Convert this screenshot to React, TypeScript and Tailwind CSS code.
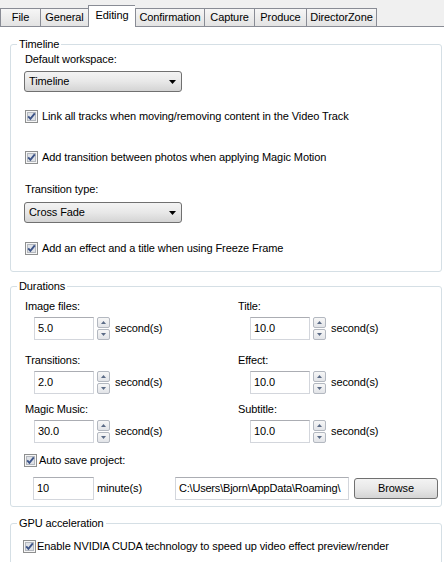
import React from 'react';

const tabs = [
  { label: 'File', w: 'w-[40px]' },
  { label: 'General', w: 'w-[48px]' },
  { label: 'Editing', w: 'w-[47px]', active: true },
  { label: 'Confirmation', w: 'w-[69px]' },
  { label: 'Capture', w: 'w-[50px]' },
  { label: 'Produce', w: 'w-[52px]' },
  { label: 'DirectorZone', w: 'w-[71px]', last: true },
];

const Checkbox = () => (
  <svg width="13" height="13" viewBox="0 0 13 13" className="shrink-0">
    <rect x="0.5" y="0.5" width="12" height="12" fill="#f6f6f6" stroke="#8e8f8f" />
    <rect x="2.5" y="2.5" width="8" height="8" fill="#dfe2e7" stroke="#b4b8be" />
    <path d="M3.2 6.4 L5.4 8.8 L9.8 3.4" fill="none" stroke="#3d5488" strokeWidth="1.9" />
  </svg>
);

const CheckRow = ({ label, className = '' }: { label: string; className?: string }) => (
  <div className={`flex items-center h-[14px] ${className}`}>
    <Checkbox />
    <span className="ml-[4px] leading-[14px] whitespace-nowrap">{label}</span>
  </div>
);

const Dropdown = ({ value, className = '' }: { value: string; className?: string }) => (
  <div
    className={`flex items-center justify-between w-[158px] h-[21px] pl-[4px] pr-[5px] border border-[#707070] rounded-[3px] bg-linear-to-b from-[#f3f3f3] via-[#e8e8e8] to-[#d4d4d4] ${className}`}
  >
    <span>{value}</span>
    <svg width="7" height="4" viewBox="0 0 7 4">
      <path d="M0 0 H7 L3.5 4 Z" fill="#000" />
    </svg>
  </div>
);

const SpinHalf = ({ up }: { up?: boolean }) => (
  <div className="flex items-center justify-center h-[11px] w-[13px] border border-[#b3b8c0] rounded-[2px] bg-linear-to-b from-[#f7f7f7] to-[#e2e4e8]">
    <svg width="5" height="3" viewBox="0 0 5 3">
      <path d={up ? 'M0 3 H5 L2.5 0 Z' : 'M0 0 H5 L2.5 3 Z'} fill="#5b6b86" />
    </svg>
  </div>
);

const TextBox = ({ value, className = '' }: { value: string; className?: string }) => (
  <div
    className={`flex items-center h-[23px] pl-[3px] border border-[#d3d6dc] border-t-[#abadb3] bg-white overflow-hidden whitespace-nowrap ${className}`}
  >
    {value}
  </div>
);

const Duration = ({ label, value, indent, className = '' }: { label: string; value: string; indent: string; className?: string }) => (
  <div className={`flex flex-col ${className}`}>
    <span className="leading-[14px]">{label}</span>
    <div className={`flex items-center mt-[4px] ${indent}`}>
      <TextBox value={value} className="w-[60px]" />
      <div className="flex flex-col gap-[1px] ml-[3px]">
        <SpinHalf up />
        <SpinHalf />
      </div>
      <span className="ml-[5px]">second(s)</span>
    </div>
  </div>
);

const Group = ({ title, children, className = '' }: { title: string; children: React.ReactNode; className?: string }) => (
  <fieldset className={`border border-[#d5dfe5] rounded-[3px] pl-[14px] pr-[2px] ${className}`}>
    <legend className="ml-[-8px] px-[2px] leading-[14px]">{title}</legend>
    {children}
  </fieldset>
);

export default function App() {
  return (
    <div className="w-[444px] h-[562px] overflow-hidden bg-white text-black text-[11px] tracking-[-0.1px] font-['Liberation_Sans',Arial,sans-serif]">
      {/* Tab strip */}
      <div className="flex items-end h-[27px] bg-[#f0f0f0] border-b border-[#898c95]">
        {tabs.map((t) =>
          t.active ? (
            <div
              key={t.label}
              className={`relative z-10 -mb-px flex items-center justify-center h-[22px] ${t.w} bg-white border-l border-t border-[#898c95] pb-[3px]`}
            >
              {t.label}
            </div>
          ) : (
            <div
              key={t.label}
              className={`flex items-center justify-center h-[18px] ${t.w} border-l border-t border-[#898c95] bg-linear-to-b from-[#f6f6f6] to-[#e3e3e3] ${t.last ? 'border-r' : ''}`}
            >
              {t.label}
            </div>
          )
        )}
      </div>

      {/* Page */}
      <div className="pl-[10px] pr-[2px] pt-[10px] flex flex-col">
        <Group title="Timeline" className="pb-[16px]">
          <div className="flex flex-col">
            <span className="mt-[1px] leading-[14px]">Default workspace:</span>
            <Dropdown value="Timeline" className="mt-[5px] ml-[-1px]" />
            <CheckRow label="Link all tracks when moving/removing content in the Video Track" className="mt-[17px]" />
            <CheckRow label="Add transition between photos when applying Magic Motion" className="mt-[27px]" />
            <span className="mt-[18px] leading-[14px]">Transition type:</span>
            <Dropdown value="Cross Fade" className="mt-[6px] ml-[-1px]" />
            <CheckRow label="Add an effect and a title when using Freeze Frame" className="mt-[18px]" />
          </div>
        </Group>

        <Group title="Durations" className="mt-[7px] pb-[6px]">
          <div className="grid grid-cols-[213px_1fr] mt-[6px]">
            <Duration label="Image files:" value="5.0" indent="ml-[9px]" />
            <Duration label="Title:" value="10.0" indent="ml-[12px]" />
            <Duration label="Transitions:" value="2.0" indent="ml-[9px]" className="mt-[13px]" />
            <Duration label="Effect:" value="10.0" indent="ml-[12px]" className="mt-[13px]" />
            <Duration label="Magic Music:" value="30.0" indent="ml-[9px]" className="mt-[8px]" />
            <Duration label="Subtitle:" value="10.0" indent="ml-[12px]" className="mt-[8px]" />
          </div>
          <div className="ml-[-1px] mt-[10px] flex items-center h-[14px]">
            <Checkbox />
            <span className="ml-[2px]">Auto save project:</span>
          </div>
          <div className="flex items-center mt-[10px] ml-[8px]">
            <TextBox value="10" className="w-[61px]" />
            <span className="ml-[3px]">minute(s)</span>
            <TextBox value="C:\Users\Bjorn\AppData\Roaming\" className="ml-[33px] w-[174px] tracking-[-0.2px]" />
            <div className="ml-[5px] flex items-center justify-center w-[84px] h-[21px] border border-[#707070] rounded-[3px] bg-linear-to-b from-[#f3f3f3] via-[#e8e8e8] to-[#d4d4d4]">
              Browse
            </div>
          </div>
        </Group>

        <Group title="GPU acceleration" className="mt-[9px] pb-[16px]">
          <div className="ml-[-2px] mt-[9px] flex items-center h-[14px]">
            <Checkbox />
            <span className="ml-[1px] whitespace-nowrap">Enable NVIDIA CUDA technology to speed up video effect preview/render</span>
          </div>
        </Group>
      </div>
    </div>
  );
}
